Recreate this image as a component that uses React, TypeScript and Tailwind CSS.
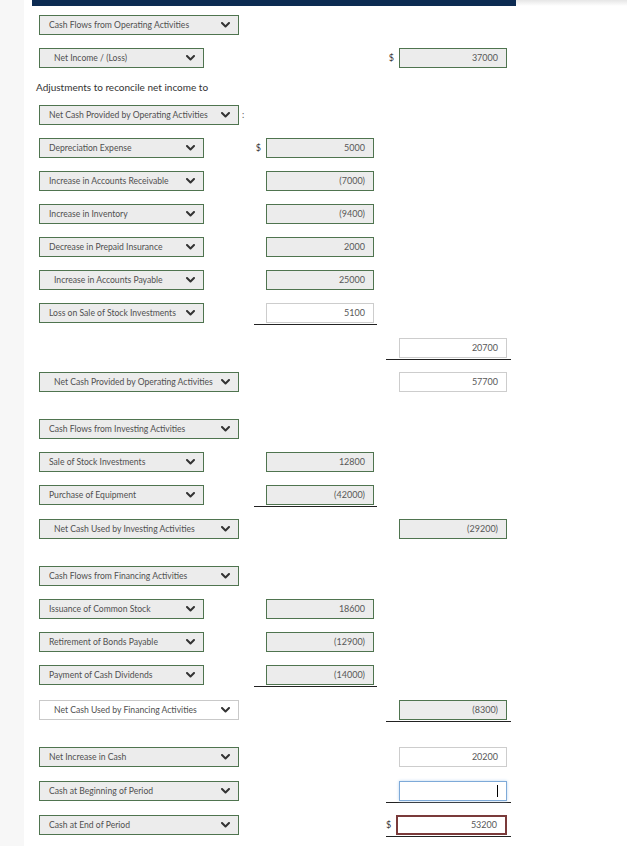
import React from 'react';

type Tone = 'green' | 'plain';

function Chevron() {
    return (
        <svg width="9" height="6" viewBox="0 0 9 6" className="shrink-0">
            <path d="M1 1 L4.5 4.5 L8 1" fill="none" stroke="#333" strokeWidth="2" strokeLinecap="round" strokeLinejoin="round" />
        </svg>
    );
}

function Select({ label, wide, indent, tone = 'green' }: { label: string; wide?: boolean; indent?: boolean; tone?: Tone }) {
    const box = tone === 'green' ? 'bg-[#ececec] border-[#4f744f]' : 'bg-white border-[#c9c9c9]';
    return (
        <div className={`h-[20px] border flex items-center justify-between pr-[8px] ${box} ${wide ? 'w-[200px]' : 'w-[165px]'} ${indent ? 'pl-[14px]' : 'pl-[9px]'}`}>
            <span className="text-[8.6px] text-[#505050] whitespace-nowrap">{label}</span>
            <Chevron />
        </div>
    );
}

type Kind = 'green' | 'white' | 'focus' | 'error';

function Amount({ value, kind = 'green' }: { value?: string; kind?: Kind }) {
    const styles: Record<Kind, string> = {
        green: 'border bg-[#ececec] border-[#4f744f]',
        white: 'border bg-white border-[#cdcdcd]',
        focus: 'border bg-white border-[#7eaad8] shadow-[0_0_3px_#bcd6f0]',
        error: 'border-2 bg-white border-[#7a3a3a]',
    };
    return (
        <div className={`h-[20px] flex items-center justify-end pr-[8px] text-[9px] text-[#585858] ${styles[kind]} ${kind === 'error' ? 'w-[111px]' : 'w-[108px]'}`}>
            {kind === 'focus' ? <span className="w-px h-[12px] bg-black" /> : value}
        </div>
    );
}

function Dollar() {
    return <span className="text-[9px] text-[#333] mr-[5px]">$</span>;
}

type Cell = { value?: string; kind?: Kind; dollar?: boolean; line?: boolean };

type Row = {
    top: string;
    caption?: string;
    label?: string;
    wide?: boolean;
    indent?: boolean;
    tone?: Tone;
    colon?: boolean;
    mid?: Cell;
    right?: Cell;
};

const rows: Row[] = [
    { top: 'mt-[9px]', label: 'Cash Flows from Operating Activities', wide: true },
    { top: 'mt-[13px]', label: 'Net Income / (Loss)', indent: true, right: { value: '37000', dollar: true } },
    { top: 'mt-[13px]', caption: 'Adjustments to reconcile net income to' },
    { top: 'mt-[12px]', label: 'Net Cash Provided by Operating Activities', wide: true, colon: true },
    { top: 'mt-[13px]', label: 'Depreciation Expense', mid: { value: '5000', dollar: true } },
    { top: 'mt-[13px]', label: 'Increase in Accounts Receivable', mid: { value: '(7000)' } },
    { top: 'mt-[13px]', label: 'Increase in Inventory', mid: { value: '(9400)' } },
    { top: 'mt-[13px]', label: 'Decrease in Prepaid Insurance', mid: { value: '2000' } },
    { top: 'mt-[13px]', label: 'Increase in Accounts Payable', indent: true, mid: { value: '25000' } },
    { top: 'mt-[13px]', label: 'Loss on Sale of Stock Investments', mid: { value: '5100', kind: 'white', line: true } },
    { top: 'mt-[15px]', right: { value: '20700', kind: 'white', line: true } },
    { top: 'mt-[14px]', label: 'Net Cash Provided by Operating Activities', wide: true, indent: true, right: { value: '57700', kind: 'white' } },
    { top: 'mt-[27px]', label: 'Cash Flows from Investing Activities', wide: true },
    { top: 'mt-[13px]', label: 'Sale of Stock Investments', mid: { value: '12800' } },
    { top: 'mt-[13px]', label: 'Purchase of Equipment', mid: { value: '(42000)', line: true } },
    { top: 'mt-[14px]', label: 'Net Cash Used by Investing Activities', wide: true, indent: true, right: { value: '(29200)' } },
    { top: 'mt-[27px]', label: 'Cash Flows from Financing Activities', wide: true },
    { top: 'mt-[13px]', label: 'Issuance of Common Stock', mid: { value: '18600' } },
    { top: 'mt-[13px]', label: 'Retirement of Bonds Payable', mid: { value: '(12900)' } },
    { top: 'mt-[13px]', label: 'Payment of Cash Dividends', mid: { value: '(14000)', line: true } },
    { top: 'mt-[15px]', label: 'Net Cash Used by Financing Activities', wide: true, indent: true, tone: 'plain', right: { value: '(8300)', line: true } },
    { top: 'mt-[27px]', label: 'Net Increase in Cash', wide: true, right: { value: '20200', kind: 'white' } },
    { top: 'mt-[14px]', label: 'Cash at Beginning of Period', wide: true, right: { kind: 'focus', line: true } },
    { top: 'mt-[14px]', label: 'Cash at End of Period', wide: true, right: { value: '53200', kind: 'error', dollar: true, line: true } },
];

function AmountCell({ cell, width, pr }: { cell?: Cell; width: string; pr: string }) {
    if (!cell) return <div className={`${width} shrink-0`} />;
    return (
        <div className={`${width} ${pr} shrink-0 self-start flex items-center justify-end ${cell.line ? 'pb-[1px] border-b border-[#222]' : ''}`}>
            {cell.dollar && <Dollar />}
            <Amount value={cell.value} kind={cell.kind} />
        </div>
    );
}

export default function App() {
    return (
        <div className="w-[627px] h-[846px] flex bg-white overflow-hidden" style={{ fontFamily: 'Lato, "Open Sans", sans-serif' }}>
            <div className="w-[24px] shrink-0 bg-[#f7f7f7]" />
            <div className="flex-1 flex flex-col">
                <div className="flex">
                    <div className="w-[8px]" />
                    <div className="w-[484px] h-[6px] bg-[#0c2b52]" />
                    <div className="flex-1 h-[6px] bg-gradient-to-b from-[#e6e6e6] to-white" />
                </div>
                {rows.map((r, i) =>
                    r.caption ? (
                        <div key={i} className={`${r.top} h-[12px] leading-[12px] pl-[12px] text-[10px] text-[#333]`}>{r.caption}</div>
                    ) : (
                        <div key={i} className={`${r.top} h-[20px] flex items-start`}>
                            <div className="w-[230px] shrink-0 pl-[15px] flex items-center">
                                {r.label && <Select label={r.label} wide={r.wide} indent={r.indent} tone={r.tone} />}
                                {r.colon && <span className="ml-[3px] text-[9px] text-[#555]">:</span>}
                            </div>
                            <AmountCell cell={r.mid} width="w-[123px]" pr="pr-[3px]" />
                            <div className="w-[9px] shrink-0" />
                            <AmountCell cell={r.right} width="w-[125px]" pr="pr-[4px]" />
                        </div>
                    )
                )}
            </div>
        </div>
    );
}
